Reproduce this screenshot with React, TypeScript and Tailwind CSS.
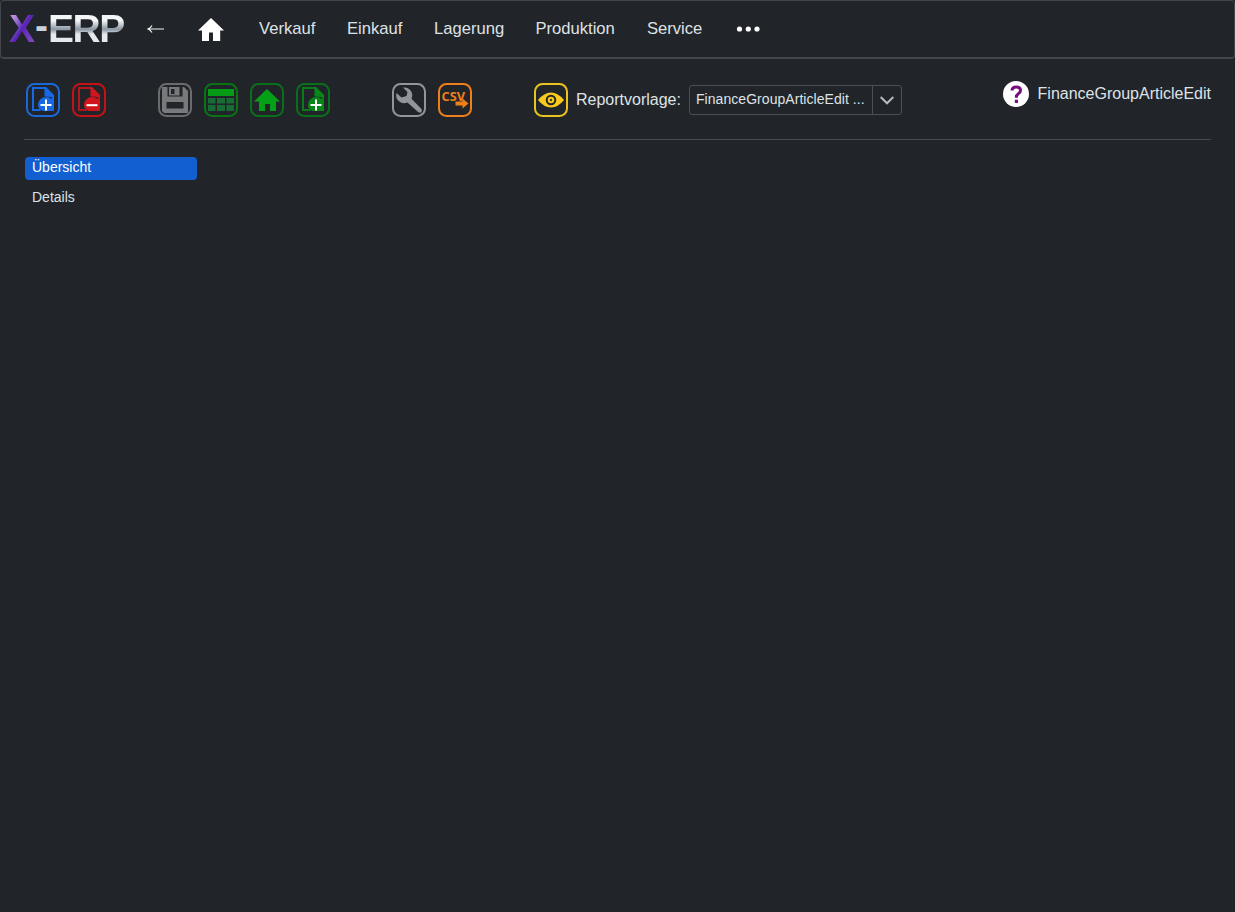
import type { ReactNode } from "react";

const NAV_ITEMS = [
  { label: "Verkauf", cls: "w-[88px]" },
  { label: "Einkauf", cls: "w-[87px]" },
  { label: "Lagerung", cls: "w-[101.5px]" },
  { label: "Produktion", cls: "w-[111.5px]" },
  { label: "Service", cls: "w-[88.5px]" },
];

function ToolButton({ title, color, children }: { title: string; color: string; children: ReactNode }) {
  return (
    <button type="button" aria-label={title} className={`block h-[34px] w-[34px] rounded-lg ${color}`}>
      <svg width="34" height="34" viewBox="0 0 34 34" fill="currentColor">
        <rect x="1" y="1" width="32" height="32" rx="7.5" fill="none" stroke="currentColor" strokeWidth="2" />
        {children}
      </svg>
    </button>
  );
}

/** Sheet with a folded corner and a round badge holding a plus or a minus. */
function FileGlyph({ sign, fill, line = fill }: { sign: "plus" | "minus"; fill: string; line?: string }) {
  return (
    <>
      <path d="M14.500 27H7V5h12l8 8v14" fill="none" stroke={line} strokeWidth="2" />
      <path d="M18.500 4H20l8 8v3.500L25 14l-6.500-.5z" fill={fill} />
      <path d="M12 22a8 8 0 0 1 8-8q3.500 0 6 2l2 1.500V28H17q-5-2-5-6z" fill={fill} />
      <path d={sign === "plus" ? "M20 16.500v11M14.500 22h11" : "M14.500 22.200h11"} stroke="#fff" strokeWidth="2" />
    </>
  );
}

function HouseGlyph() {
  return (
    <svg width="26" height="23" viewBox="0 0 26 24" preserveAspectRatio="none" fill="#fff" className="ml-[34px]">
      <path d="M13 0 26 13h-3.800v11H15v-9h-4v9H4V13H0z" />
    </svg>
  );
}

function NavBar() {
  return (
    <nav className="flex h-[59px] items-center rounded border border-b-2 border-[#42464c] pl-2">
      <div className="-mt-0.5 flex h-full w-[138px] items-center text-[39px] leading-none font-bold">
        <span className="w-[26px] bg-linear-to-br from-[#b98bd8] from-20% via-[#5b21b6] via-50% to-[#7d48bd] to-85% bg-clip-text text-transparent">
          X
        </span>
        <span className="-mt-[5px] w-[13px] text-[#c9d2da]">-</span>
        <span className="bg-linear-to-b from-[#f3f5f7] from-30% via-[#8b97a3] via-52% to-[#e6eaee] to-65% bg-clip-text tracking-[-1.5px] text-transparent">
          ERP
        </span>
      </div>
      <svg width="17" height="10" viewBox="0 0 17 10" fill="none" stroke="#f4f4f4" strokeWidth="1.2">
        <path d="M1 5h16M5 1.500Q3.500 4 1 5q2.500 1 4 3.500" />
      </svg>
      <HouseGlyph />
      <div className="ml-[35px] flex text-[16.6px] leading-6">
        {NAV_ITEMS.map((item) => (
          <a key={item.label} href="#" className={item.cls}>
            {item.label}
          </a>
        ))}
      </div>
      <svg width="25" height="6" viewBox="0 0 25 6" fill="#fff">
        <circle cx="3.500" cy="3" r="2.600" />
        <circle cx="12.300" cy="3" r="2.600" />
        <circle cx="21" cy="3" r="2.600" />
      </svg>
    </nav>
  );
}

function Toolbar() {
  return (
    <div className="mx-6 flex h-[81px] items-start border-b border-[#484c50] pt-6 pl-0.5">
      <div className="flex gap-3">
        <ToolButton title="Neu" color="text-[#1b68d8]">
          <FileGlyph sign="plus" fill="#1768e5" />
        </ToolButton>
        <ToolButton title="Löschen" color="text-[#c51218]">
          <FileGlyph sign="minus" fill="#cf161c" line="#b3161b" />
        </ToolButton>
      </div>
      <div className="ml-[52px] flex gap-3">
        <ToolButton title="Speichern" color="text-[#6b6b6b]">
          <path
            fillRule="evenodd"
            d="M4 4h22l4 4v22H6l-2-2zM9.500 4v9.500h15V4zM8.500 19v6.500h17V19z"
            fill="#77797b"
          />
          <path fillRule="evenodd" d="M11 4h10.500v8.500H11zM13 6v5h3.500V6z" fill="#77797b" />
        </ToolButton>
        <ToolButton title="Tabelle" color="text-[#087512]">
          <path d="M4 6h26v7H4z" fill="#059b17" />
          <path
            d="M4 15h7.500v5.500H4zM13 15h8v5.500h-8zM22.500 15H30v5.500h-7.500zM4 22h7.500v6H4zM13 22h8v6h-8zM22.500 22H30v6h-7.500z"
            fill="#176b34"
          />
        </ToolButton>
        <ToolButton title="Start" color="text-[#08701a]">
          <path d="M17 6 30 18.500h-4V28h-6v-7h-5v7H9v-9.500H4z" fill="#05a018" />
        </ToolButton>
        <ToolButton title="Hinzufügen" color="text-[#08701a]">
          <FileGlyph sign="plus" fill="#078718" line="#087c19" />
        </ToolButton>
      </div>
      <div className="ml-[62px] flex gap-3">
        <ToolButton title="Einstellungen" color="text-[#92959b]">
          <path d="M11 4.500a8 8 0 0 1 8.500 11.200L29.500 26q1 2-.5 3.500-2 .5-3.500-1L15.500 19.500A8 8 0 0 1 4.500 10l5 4.500 5-1.500 1-4z" />
        </ToolButton>
        <ToolButton title="CSV Export" color="text-[#ef7f1a]">
          <text
            x="3.500"
            y="18"
            textLength="23.5"
            lengthAdjust="spacingAndGlyphs"
            className="font-['Open_Sans',sans-serif] text-[12px] font-bold"
          >
            CSV
          </text>
          <path d="M17.500 18.500h7V15.500l6 5-6 5v-3h-7z" />
        </ToolButton>
      </div>
      <div className="ml-[62px] flex items-center">
        <ToolButton title="Vorschau" color="text-[#eac320]">
          <path fillRule="evenodd" d="M4 17Q10 9.500 17 9.500T30 17Q24 24.500 17 24.500T4 17zM17 11.700a5.300 5.300 0 1 0 0 10.600 5.300 5.300 0 0 0 0-10.600z" fill="#fbc81c" />
          <circle cx="17" cy="17" r="3.300" fill="#fbc81c" />
          <circle cx="17" cy="17" r="1.200" fill="#42402a" />
        </ToolButton>
        <span className="ml-2 w-[113px] text-base">Reportvorlage:</span>
        <div className="flex h-[30px] w-[213px] rounded-[3px] border border-[#495057] text-sm">
          <span className="flex-1 pt-[3px] pl-1.5 tracking-[0.05px] whitespace-nowrap">FinanceGroupArticleEdit ...</span>
          <button type="button" aria-label="Auswahl öffnen" className="flex w-[29px] items-center justify-center border-l border-[#495057]">
            <svg width="14" height="9" viewBox="0 0 14 9" fill="none" stroke="#b6b9bd" strokeWidth="2">
              <path d="m.7 1 6.300 6.300L13.300 1" />
            </svg>
          </button>
        </div>
      </div>
      <div className="-mt-0.5 ml-auto flex items-center">
        <svg width="26" height="26" viewBox="0 0 26 26">
          <circle cx="13" cy="13" r="13" fill="#fff" />
          <path d="M9 9.500q.2-3.500 4.200-3.500 4.300 0 4.300 3.500 0 2-2.200 3.200-2 1.200-2 4" fill="none" stroke="#770c7e" strokeWidth="3" />
          <path d="M11.800 18.700h3.200v3.200h-3.200z" fill="#770c7e" />
        </svg>
        <span className="ml-[9px] text-base">FinanceGroupArticleEdit</span>
      </div>
    </div>
  );
}

export default function App() {
  return (
    <div className="h-[912px] w-full overflow-hidden bg-[#212529] font-['Liberation_Sans',Arial,sans-serif] text-[#dee2e6]">
      <NavBar />
      <Toolbar />
      <aside className="mt-[17px] ml-[25px] flex w-[172px] flex-col gap-[7px] text-sm leading-5">
        <a href="#" className="h-[23px] rounded bg-[#125fd2] pl-[7px] text-white">
          Übersicht
        </a>
        <a href="#" className="h-[23px] pl-[7px]">
          Details
        </a>
      </aside>
    </div>
  );
}
